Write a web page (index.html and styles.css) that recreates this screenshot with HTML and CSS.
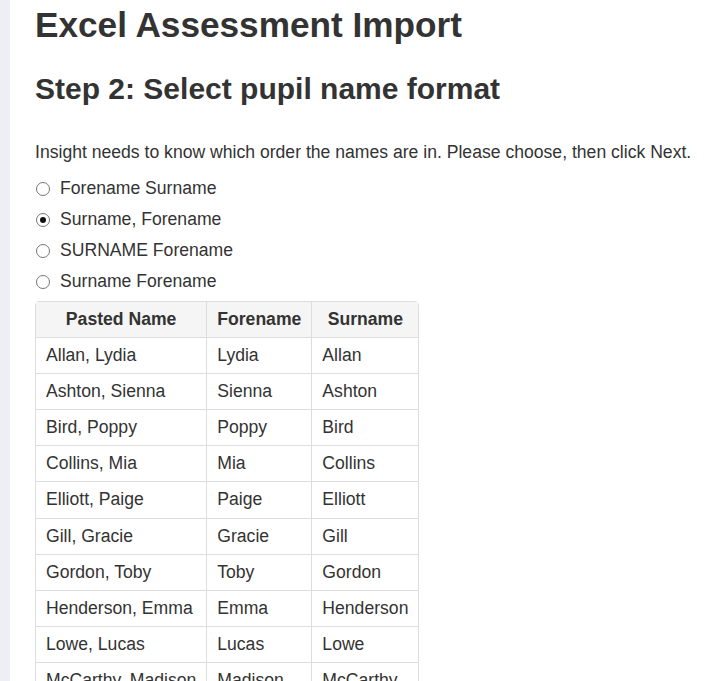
FILE: index.html
```html
<!DOCTYPE html>
<html>
<head>
<meta charset="utf-8">
<link rel="stylesheet" href="styles.css">
</head>
<body>
<div class="page">
  <div class="side"></div>
  <main class="main">
    <h1 class="title">Excel Assessment Import</h1>
    <h2 class="step">Step 2: Select pupil name format</h2>
    <p class="intro">Insight needs to know which order the names are in. Please choose, then click Next.</p>
    <div class="options">
      <label class="option"><span class="radio"></span>Forename Surname</label>
      <label class="option"><span class="radio checked"></span>Surname, Forename</label>
      <label class="option"><span class="radio"></span>SURNAME Forename</label>
      <label class="option"><span class="radio"></span>Surname Forename</label>
    </div>
    <table class="names">
      <thead>
        <tr><th>Pasted Name</th><th>Forename</th><th>Surname</th></tr>
      </thead>
      <tbody>
        <tr><td>Allan, Lydia</td><td>Lydia</td><td>Allan</td></tr>
        <tr><td>Ashton, Sienna</td><td>Sienna</td><td>Ashton</td></tr>
        <tr><td>Bird, Poppy</td><td>Poppy</td><td>Bird</td></tr>
        <tr><td>Collins, Mia</td><td>Mia</td><td>Collins</td></tr>
        <tr><td>Elliott, Paige</td><td>Paige</td><td>Elliott</td></tr>
        <tr><td>Gill, Gracie</td><td>Gracie</td><td>Gill</td></tr>
        <tr><td>Gordon, Toby</td><td>Toby</td><td>Gordon</td></tr>
        <tr><td>Henderson, Emma</td><td>Emma</td><td>Henderson</td></tr>
        <tr><td>Lowe, Lucas</td><td>Lucas</td><td>Lowe</td></tr>
        <tr><td>McCarthy, Madison</td><td>Madison</td><td>McCarthy</td></tr>
        <tr><td>Morris, Ella</td><td>Ella</td><td>Morris</td></tr>
      </tbody>
    </table>
  </main>
</div>
</body>
</html>
```

FILE: styles.css
```css
html, body {
  margin: 0;
  padding: 0;
  height: 100%;
  overflow: hidden;
  background: #fff;
}
body {
  font-family: "Liberation Sans", Arial, sans-serif;
  color: #333;
  font-size: 17.6px;
}
.page {
  display: flex;
  min-height: 100%;
}
.side {
  width: 10px;
  flex: none;
  background: #eeeef6;
}
.main {
  padding-left: 25px;
}
.title {
  font-size: 35.2px;
  font-weight: bold;
  line-height: 40px;
  margin: 5px 0 0;
}
.step {
  font-size: 30px;
  font-weight: bold;
  line-height: 34px;
  margin: 27px 0 0;
}
.intro {
  margin: 36px 0 0;
  line-height: 20px;
}
.options {
  margin-top: 11px;
  display: flex;
  flex-direction: column;
}
.option {
  display: flex;
  align-items: center;
  height: 31px;
}
.radio {
  width: 14px;
  height: 14px;
  border: 1px solid #767676;
  border-radius: 50%;
  box-sizing: border-box;
  margin: 0 10px 0 1px;
  position: relative;
}
.radio.checked::after {
  content: "";
  position: absolute;
  left: 3px;
  top: 3px;
  width: 6px;
  height: 6px;
  border-radius: 50%;
  background: #111;
}
.names {
  border-collapse: separate;
  border-spacing: 0;
  border: 1px solid #ddd;
  border-radius: 4px;
  margin-top: 4px;
}
.names th, .names td {
  padding: 8px 10px;
  line-height: 19.1px;
  border-left: 1px solid #ddd;
  border-top: 1px solid #ddd;
  text-align: left;
}
.names th {
  background: #f5f5f5;
  text-align: center;
  border-top: none;
}
.names th:first-child, .names td:first-child {
  border-left: none;
}
```
